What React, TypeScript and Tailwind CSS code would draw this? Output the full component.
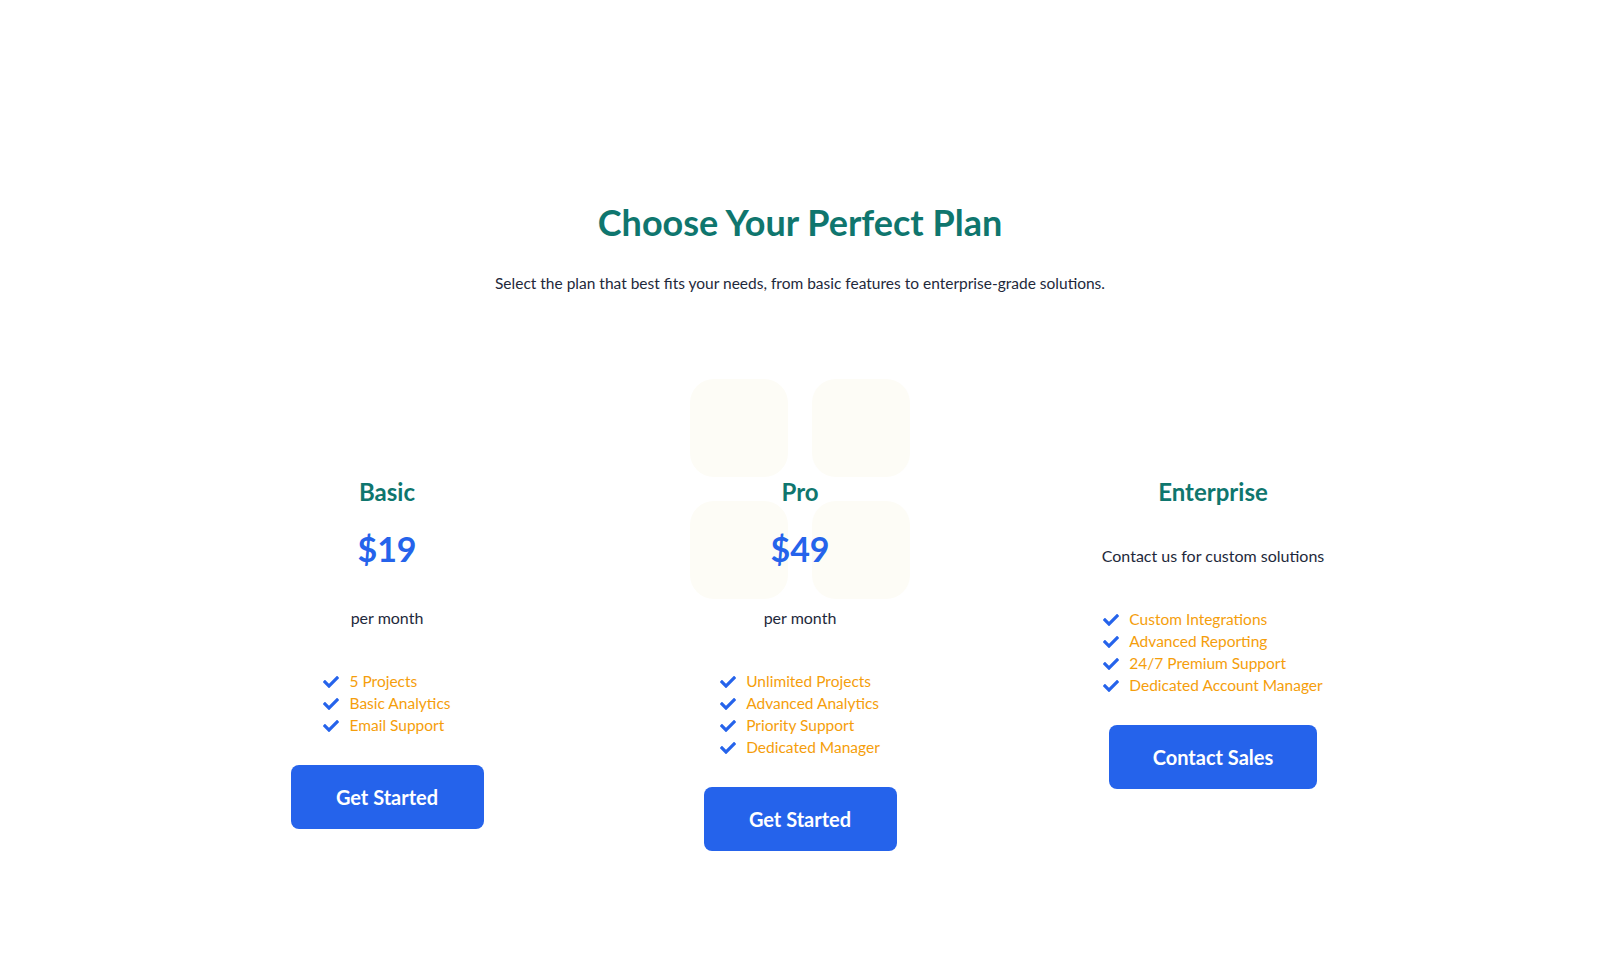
import React from 'react';
import { FaCheck } from 'react-icons/fa';

interface Plan {
  name: string;
  price?: string;
  note?: string;
  features: string[];
  cta: string;
  ctaWidth: string;
  decorated?: boolean;
}

const plans: Plan[] = [
  {
    name: 'Basic',
    price: '$19',
    features: ['5 Projects', 'Basic Analytics', 'Email Support'],
    cta: 'Get Started',
    ctaWidth: 'w-[193px]',
  },
  {
    name: 'Pro',
    price: '$49',
    features: ['Unlimited Projects', 'Advanced Analytics', 'Priority Support', 'Dedicated Manager'],
    cta: 'Get Started',
    ctaWidth: 'w-[193px]',
    decorated: true,
  },
  {
    name: 'Enterprise',
    note: 'Contact us for custom solutions',
    features: ['Custom Integrations', 'Advanced Reporting', '24/7 Premium Support', 'Dedicated Account Manager'],
    cta: 'Contact Sales',
    ctaWidth: 'w-[208px]',
  },
];

const FeatureList = ({ features, className }: { features: string[]; className: string }) => (
  <ul className={`relative ${className}`}>
    {features.map((f) => (
      <li key={f} className="flex h-[22px] items-center gap-[10px] text-[15.5px] text-[#f59e0b]">
        <FaCheck className="h-4 w-4 text-[#2563eb]" />
        <span>{f}</span>
      </li>
    ))}
  </ul>
);

const PlanCard = ({ plan }: { plan: Plan }) => {
  return (
    <div className="relative flex w-[413px] flex-col items-center">
      {plan.decorated && (
        <div className="absolute top-[-97px] left-1/2 grid w-[220px] -translate-x-1/2 grid-cols-[98px_98px] gap-6">
          <div className="h-[98px] w-[98px] rounded-3xl bg-[#fdfcf6]" />
          <div className="h-[98px] w-[98px] rounded-3xl bg-[#fdfcf6]" />
          <div className="h-[98px] w-[98px] rounded-3xl bg-[#fdfcf6]" />
          <div className="h-[98px] w-[98px] rounded-3xl bg-[#fdfcf6]" />
        </div>
      )}

      <h3 className="relative text-2xl leading-8 font-bold text-[#0f766e]">{plan.name}</h3>

      {plan.price ? (
        <>
          <div className="relative mt-[21px] text-[34px] leading-10 font-bold text-[#2563eb]">{plan.price}</div>
          <p className="relative mt-[37px] text-base leading-6 text-[#1e293b]">per month</p>
          <FeatureList features={plan.features} className="mt-[41px]" />
        </>
      ) : (
        <>
          <p className="relative mt-9 text-base leading-6 text-[#1e293b]">{plan.note}</p>
          <FeatureList features={plan.features} className="mt-[41px]" />
        </>
      )}

      <button
        className={`relative mt-7 h-16 ${plan.ctaWidth} rounded-lg bg-[#2563eb] text-xl font-bold text-white`}
      >
        {plan.cta}
      </button>
    </div>
  );
};

export default function App() {
  return (
    <div className="min-h-[978px] bg-white pt-[202px] font-['Lato',sans-serif]">
      <div className="flex flex-col items-center">
        <h1 className="text-4xl leading-10 font-bold text-[#0f766e]">Choose Your Perfect Plan</h1>
        <p className="mt-[29px] text-[15.5px] leading-6 text-[#1e293b]">
          Select the plan that best fits your needs, from basic features to enterprise-grade solutions.
        </p>
      </div>

      <div className="mt-[181px] flex items-start justify-center">
        {plans.map((p) => (
          <PlanCard key={p.name} plan={p} />
        ))}
      </div>
    </div>
  );
}
